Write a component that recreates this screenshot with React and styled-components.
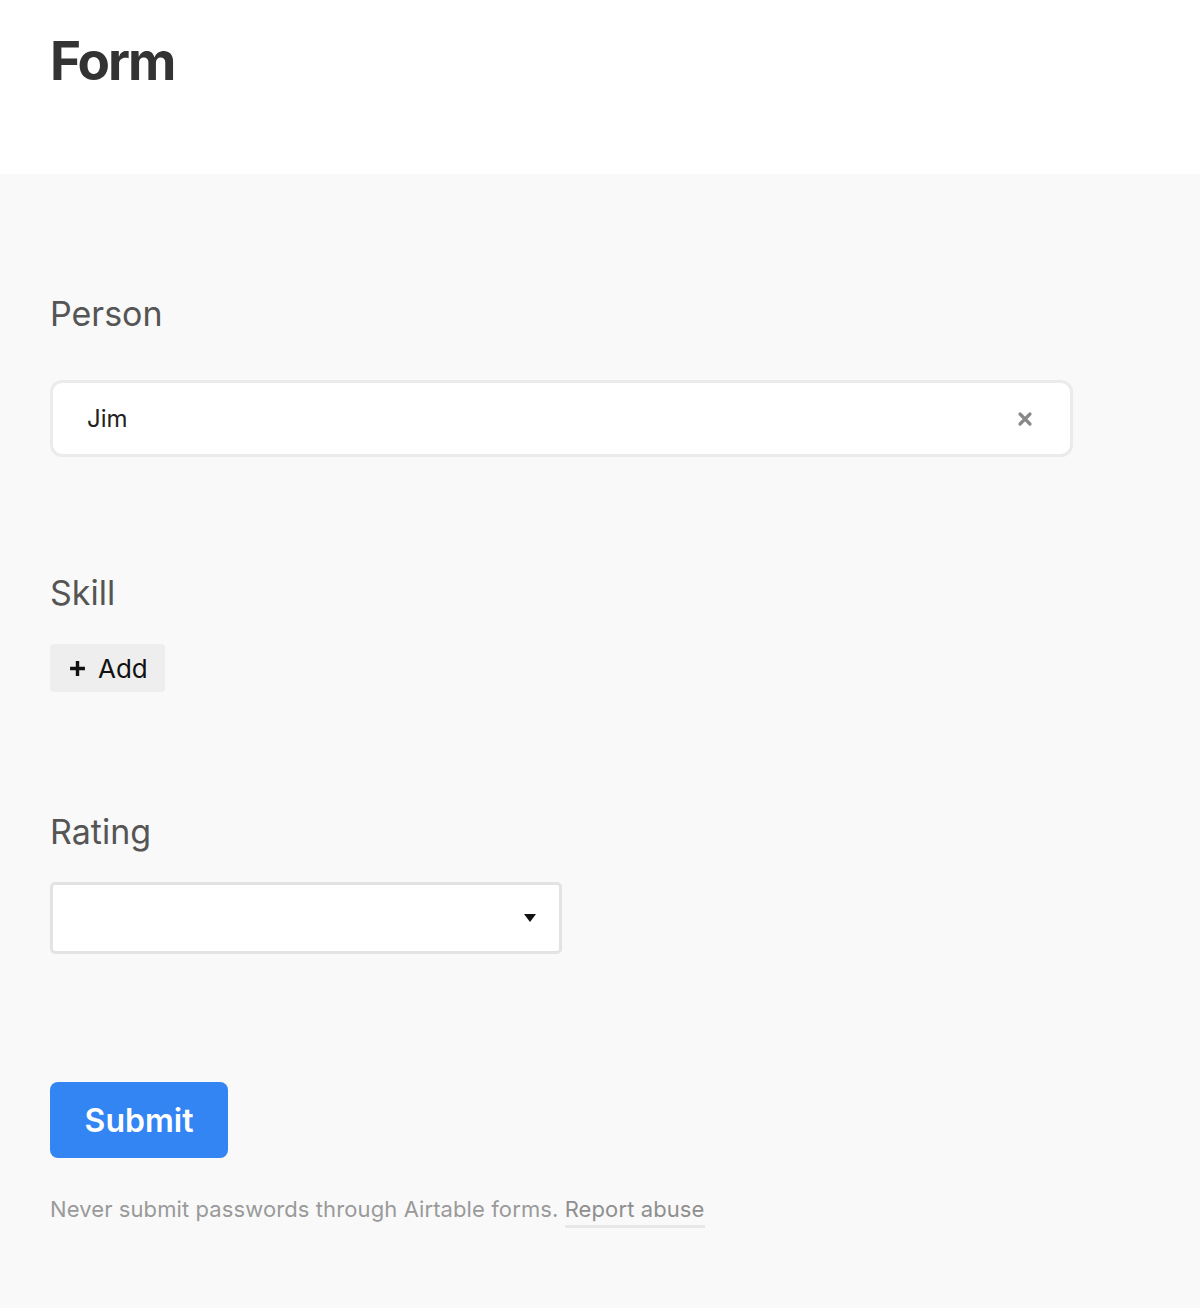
import React from "react";
import styled, { createGlobalStyle } from "styled-components";

const GlobalStyle = createGlobalStyle`
  html, body {
    margin: 0;
    padding: 0;
    background: #f9f9f9;
    font-family: Inter, "Noto Sans", sans-serif;
  }
`;

const Header = styled.header`
  background: white;
  height: 174px;
  padding: 0 50px;
  box-sizing: border-box;
  display: flex;
  align-items: flex-start;
`;

const Title = styled.h1`
  margin: 29px 0 0;
  font-size: 53px;
  font-weight: 700;
  letter-spacing: -2px;
  color: #333333;
`;

const Body = styled.main`
  background: #f9f9f9;
  padding: 118px 50px 80px;
  min-height: 1134px;
  box-sizing: border-box;
`;

const Field = styled.section`
  margin-bottom: ${(p) => p.gap || 0}px;
`;

const Label = styled.div`
  font-size: 34px;
  color: #555555;
  line-height: 44px;
  margin-bottom: ${(p) => p.space}px;
`;

const TextBox = styled.div`
  width: 1023px;
  height: 77px;
  box-sizing: border-box;
  border: 3px solid #ebebeb;
  border-radius: 12px;
  background: white;
  display: flex;
  align-items: center;
  padding: 0 36px 0 34px;
  justify-content: space-between;
  font-size: 24px;
  color: #222;
`;

const AddButton = styled.button`
  display: flex;
  align-items: center;
  gap: 12px;
  height: 48px;
  padding: 0 17px 0 19px;
  border: none;
  border-radius: 4px;
  background: #eeeeee;
  font-family: inherit;
  font-size: 26px;
  color: #111;
`;

const Select = styled.div`
  width: 512px;
  height: 72px;
  box-sizing: border-box;
  border: 3px solid #e3e3e3;
  border-radius: 5px;
  background: white;
  display: flex;
  align-items: center;
  justify-content: flex-end;
  padding-right: 22px;
`;

const SubmitButton = styled.button`
  width: 178px;
  height: 76px;
  border: none;
  border-radius: 8px;
  background: #3385f3;
  color: white;
  font-family: inherit;
  font-size: 32px;
  font-weight: 600;
`;

const Note = styled.p`
  margin: 38px 0 0;
  font-size: 22px;
  color: #9a9a9a;
  letter-spacing: 0.1px;
`;

const Report = styled.a`
  color: #8f8f8f;
  text-decoration: none;
  padding-bottom: 3px;
  border-bottom: 3px solid #e8e8e8;
`;

export default function App() {
  return (
    <>
      <GlobalStyle />
      <Header>
        <Title>Form</Title>
      </Header>
      <Body>
        <Field gap={114}>
          <Label space={44}>Person</Label>
          <TextBox>
            <span>Jim</span>
            <svg width="16" height="16" viewBox="0 0 16 16" style={{ marginRight: 1 }}>
              <path d="M3 3 L13 13 M13 3 L3 13" stroke="#888" strokeWidth="3.2" strokeLinecap="round" />
            </svg>
          </TextBox>
        </Field>
        <Field gap={118}>
          <Label space={29}>Skill</Label>
          <AddButton>
            <svg width="17" height="17" viewBox="0 0 16 16">
              <path d="M8 1 V15 M1 8 H15" stroke="#111" strokeWidth="3.2" />
            </svg>
            Add
          </AddButton>
        </Field>
        <Field gap={128}>
          <Label space={28}>Rating</Label>
          <Select>
            <svg width="14" height="10" viewBox="0 0 14 10">
              <path d="M1 1 H13 L7 9 Z" fill="#111" />
            </svg>
          </Select>
        </Field>
        <SubmitButton>Submit</SubmitButton>
        <Note>
          Never submit passwords through Airtable forms. <Report>Report abuse</Report>
        </Note>
      </Body>
    </>
  );
}
